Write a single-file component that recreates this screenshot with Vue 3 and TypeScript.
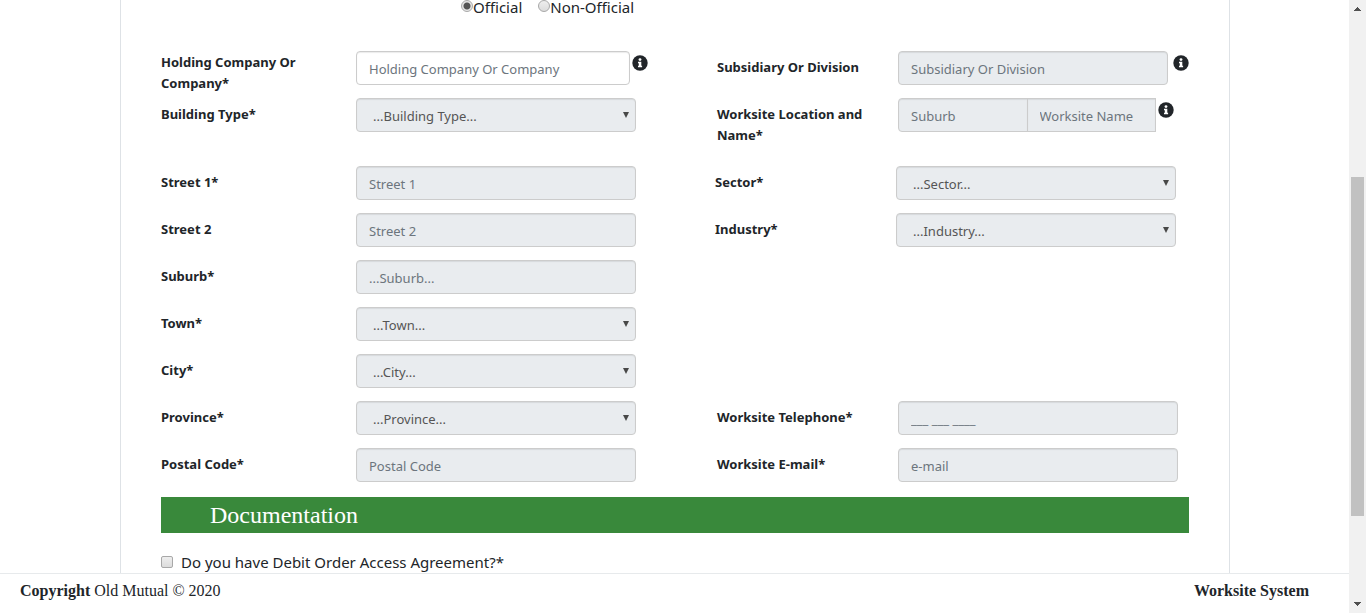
<script setup lang="ts">
import { ref } from 'vue'

type Kind = 'text' | 'select' | 'pair'

interface Field {
  id: string
  label: string
  kind: Kind
  hint: string
  second?: string
  enabled?: boolean
  info?: boolean
}

interface Row {
  left: Field
  right?: Field
  variant?: string
}

const rows: Row[] = [
  {
    left: { id: 'holding', label: 'Holding Company Or Company*', kind: 'text', hint: 'Holding Company Or Company', enabled: true, info: true },
    right: { id: 'subsidiary', label: 'Subsidiary Or Division', kind: 'text', hint: 'Subsidiary Or Division', info: true },
    variant: 'first',
  },
  {
    left: { id: 'building', label: 'Building Type*', kind: 'select', hint: '...Building Type...' },
    right: { id: 'location', label: 'Worksite Location and Name*', kind: 'pair', hint: 'Suburb', second: 'Worksite Name', info: true },
    variant: 'tall',
  },
  {
    left: { id: 'street1', label: 'Street 1*', kind: 'text', hint: 'Street 1' },
    right: { id: 'sector', label: 'Sector*', kind: 'select', hint: '...Sector...' },
    variant: 'inset',
  },
  {
    left: { id: 'street2', label: 'Street 2', kind: 'text', hint: 'Street 2' },
    right: { id: 'industry', label: 'Industry*', kind: 'select', hint: '...Industry...' },
    variant: 'inset',
  },
  { left: { id: 'suburb', label: 'Suburb*', kind: 'text', hint: '...Suburb...' } },
  { left: { id: 'town', label: 'Town*', kind: 'select', hint: '...Town...' } },
  { left: { id: 'city', label: 'City*', kind: 'select', hint: '...City...' } },
  {
    left: { id: 'province', label: 'Province*', kind: 'select', hint: '...Province...' },
    right: { id: 'telephone', label: 'Worksite Telephone*', kind: 'text', hint: '___ ___ ____' },
  },
  {
    left: { id: 'postal', label: 'Postal Code*', kind: 'text', hint: 'Postal Code' },
    right: { id: 'email', label: 'Worksite E-mail*', kind: 'text', hint: 'e-mail' },
  },
]

const sides = (row: Row): Field[] => (row.right ? [row.left, row.right] : [row.left])

const status = ref('official')
const debitOrder = ref(false)
</script>

<template>
  <div class="screen">
    <div class="page">
      <main class="main">
        <form class="panel" @submit.prevent>
          <div class="status">
            <label class="choice"><input v-model="status" type="radio" name="status" value="official" />Official</label>
            <label class="choice"><input v-model="status" type="radio" name="status" value="non-official" />Non-Official</label>
          </div>

          <div v-for="row in rows" :key="row.left.id" class="row" :class="row.variant">
            <template v-for="(field, i) in sides(row)" :key="field.id">
              <label class="label" :class="i ? 'label-right' : 'label-left'" :for="field.id">{{ field.label }}</label>
              <div class="field" :class="[i ? 'field-right' : 'field-left', field.kind, { info: field.info }]">
                <div v-if="field.kind === 'select'" class="select-box">
                  <select :id="field.id" class="control" disabled>
                    <option>{{ field.hint }}</option>
                  </select>
                  <svg class="caret" viewBox="0 0 6 6" aria-hidden="true"><path d="M0 0h6L3 6z" /></svg>
                </div>
                <input v-else :id="field.id" class="control" type="text" :placeholder="field.hint" :disabled="!field.enabled" />
                <input v-if="field.second" class="control second" type="text" :placeholder="field.second" :aria-label="field.second" disabled />
                <svg v-if="field.info" class="info-icon" viewBox="0 0 16 16" aria-hidden="true">
                  <circle cx="8" cy="8" r="7.7" fill="#212529" />
                  <circle cx="8" cy="4.6" r="1.4" fill="#fff" />
                  <path d="M6 6.8h3.3v4h.8v1.5H6v-1.5h.8V8.3H6z" fill="#fff" />
                </svg>
              </div>
            </template>
          </div>

          <h2 class="section">Documentation</h2>
          <label class="question"><input v-model="debitOrder" type="checkbox" />Do you have Debit Order Access Agreement?*</label>
        </form>
      </main>
      <footer class="footer">
        <span><strong>Copyright</strong> Old Mutual © 2020</span>
        <strong>Worksite System</strong>
      </footer>
    </div>
    <div class="scrollbar" aria-hidden="true">
      <svg class="arrow" viewBox="0 0 17 17"><path d="M8 7h1v1h1v1h1v1h1v1H5v-1h1V9h1V8h1z" /></svg>
      <div class="before"></div>
      <div class="thumb"></div>
      <div class="after"></div>
      <svg class="arrow" viewBox="0 0 17 17"><path d="M5 6h7v1h-1v1h-1v1H9v1H8V9H7V8H6V7H5z" /></svg>
    </div>
  </div>
</template>

<style>
body {
  background: #fff;
}
</style>

<style scoped>
.screen {
  display: flex;
  height: 100vh;
  overflow: hidden;
  color: #212529;
  font-family: 'Noto Sans', 'Open Sans', sans-serif;
  font-size: 15px;
}

.page {
  flex: 1;
  min-width: 0;
  display: flex;
  flex-direction: column;
}

.main {
  flex: 1;
  min-height: 0;
  overflow: hidden;
}

.panel {
  box-sizing: border-box;
  min-height: 100%;
  margin: 0 119px 0 120px;
  padding: 0 40px;
  border: solid #dee2e6;
  border-width: 0 1px;
}

.status {
  display: flex;
  gap: 16px;
  padding-left: 300px;
  margin-bottom: 37px;
  line-height: 14px;
}

.choice {
  display: flex;
}

.choice input,
.question input {
  appearance: none;
  box-sizing: border-box;
  flex: none;
  width: 12px;
  height: 12px;
  margin: 0;
  border: 1px solid #a8a8a8;
  background: linear-gradient(#eee, #dcdcdc);
}

.choice input {
  border-radius: 50%;
}

.choice input:checked {
  background: radial-gradient(circle, #555 0 3px, #e6e6e6 4px);
}

.row {
  display: grid;
  grid-template-columns: 195fr 280fr 81fr 181fr 291fr;
  align-items: start;
  min-height: 47px;
}

.row.inset {
  grid-template-columns: 195fr 280fr 79fr 181fr 293fr;
}

.row.first {
  height: 47px;
}

.row.tall {
  min-height: 68px;
}

.label {
  padding-top: 6px;
  font-size: 13px;
  font-weight: 700;
  line-height: 21px;
}

.first .label-left {
  padding: 1px 40px 0 0;
}

.label-right {
  grid-column: 4;
  padding-right: 24px;
}

.field {
  display: flex;
  align-items: flex-start;
}

.field-right {
  grid-column: 5;
  width: 280px;
}

.field-left.info {
  margin-right: -12px;
  gap: 2px;
}

.field-right.info {
  width: 291px;
  gap: 5px;
}

.field-right.pair {
  width: 276px;
  gap: 0;
}

.control {
  box-sizing: border-box;
  flex: 1;
  width: 100%;
  min-width: 0;
  height: 34px;
  margin: 0;
  padding: 3px 12px 1px;
  border: 1px solid #ccc;
  border-radius: 4px;
  background: #fff;
  box-shadow: inset 0 1px 1px rgba(0, 0, 0, 0.08);
  color: #555;
  font-family: inherit;
  font-size: 13px;
  line-height: 20px;
}

.control:disabled {
  background: #e9ecef;
  opacity: 1;
}

.control::placeholder {
  color: #6c757d;
  opacity: 1;
}

.pair .control {
  border-radius: 4px 0 0 4px;
}

.pair .second {
  margin-left: -1px;
  border-radius: 0;
}

.select-box {
  flex: 1;
  display: grid;
  align-items: center;
}

.select-box > * {
  grid-area: 1 / 1;
}

.select-box .control {
  appearance: none;
  padding: 3px 28px 1px 16px;
}

.caret {
  justify-self: end;
  width: 6px;
  height: 6px;
  margin-right: 7px;
  fill: #484848;
  pointer-events: none;
}

.info-icon {
  flex: none;
  width: 16px;
  height: 16px;
  margin-top: 4px;
}

.pair .info-icon {
  margin-left: 2px;
}

.section {
  margin: 2px 0 17px;
  padding-left: 49px;
  background: #39893b;
  color: #fff;
  font-family: 'Liberation Serif', serif;
  font-size: 24px;
  font-weight: 400;
  line-height: 36px;
}

.question {
  display: flex;
  align-items: center;
  gap: 8px;
  line-height: 24px;
}

.question input {
  border-radius: 2px;
}

.question input:checked {
  background: #555;
}

.footer {
  display: flex;
  justify-content: space-between;
  padding: 5px 40px 10px 20px;
  border-top: 1px solid #e7eaec;
  background: #fff;
  font-family: 'Liberation Serif', serif;
  font-size: 16px;
  line-height: 24px;
}

.scrollbar {
  flex: none;
  display: flex;
  flex-direction: column;
  width: 17px;
  background: #f1f1f1;
}

.arrow {
  flex: none;
  width: 17px;
  height: 17px;
  fill: #505050;
  shape-rendering: crispEdges;
}

.before {
  flex: 160;
}

.thumb {
  flex: 339;
  margin: 0 2px;
  background: #c1c1c1;
}

.after {
  flex: 80;
}
</style>
